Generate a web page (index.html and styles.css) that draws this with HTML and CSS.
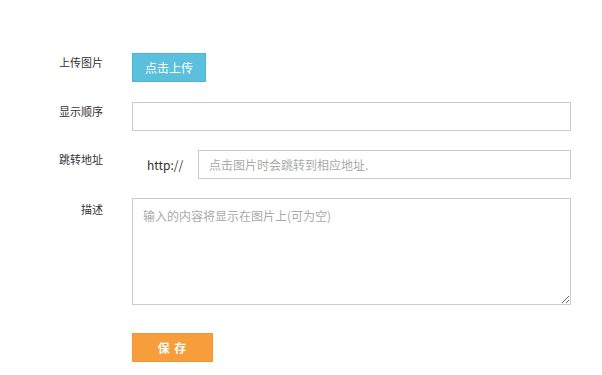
FILE: index.html
```html
<!DOCTYPE html>
<html lang="zh-CN">
<head>
    <meta charset="UTF-8">
    <meta name="viewport" content="width=device-width, initial-scale=1.0">
    <title>添加图片</title>
    <link rel="stylesheet" href="styles.css">
</head>
<body>
    <form class="pic-form">
        <div class="form-row">
            <label class="form-label">上传图片</label>
            <div class="form-field">
                <button type="button" class="btn-upload">点击上传</button>
            </div>
        </div>
        <div class="form-row">
            <label class="form-label" for="sort">显示顺序</label>
            <div class="form-field">
                <input type="text" id="sort" class="text-input">
            </div>
        </div>
        <div class="form-row">
            <label class="form-label" for="link">跳转地址</label>
            <div class="form-field link-field">
                <span class="link-prefix">http://</span>
                <input type="text" id="link" class="text-input" placeholder="点击图片时会跳转到相应地址.">
            </div>
        </div>
        <div class="form-row">
            <label class="form-label desc-label" for="desc">描述</label>
            <div class="form-field">
                <textarea id="desc" class="text-area" placeholder="输入的内容将显示在图片上(可为空)"></textarea>
            </div>
        </div>
        <div class="form-row save-row">
            <div class="form-label"></div>
            <div class="form-field">
                <button type="submit" class="btn-save">保 存</button>
            </div>
        </div>
    </form>
</body>
</html>
```

FILE: styles.css
```css
body {
    margin: 0;
    padding: 0;
    background: #fff;
    font-family: "Noto Sans CJK SC", "Noto Sans", sans-serif;
    font-size: 12px;
    color: #333;
}
.pic-form {
    padding-top: 53px;
}
.form-row {
    display: flex;
    align-items: flex-start;
    gap: 29px;
    margin-bottom: 19px;
}
.form-label {
    width: 103px;
    flex-shrink: 0;
    text-align: right;
    font-size: 11px;
    line-height: 16px;
    padding-top: 1px;
}
.desc-label {
    padding-top: 3px;
}
.form-field {
    width: 439px;
}
.btn-upload {
    display: block;
    width: 74px;
    height: 29px;
    margin-bottom: 1px;
    background-color: #5bc0de;
    border: 1px solid #46b8da;
    color: #fff;
    font-family: inherit;
    font-size: 12px;
    padding: 0;
    cursor: pointer;
}
.text-input {
    display: block;
    width: 100%;
    height: 29px;
    box-sizing: border-box;
    border: 1px solid #ccc;
    padding: 0 10px;
    font-family: inherit;
    font-size: 12px;
    color: #333;
    outline: none;
}
.link-field {
    display: flex;
    align-items: center;
}
.link-prefix {
    width: 51px;
    padding-left: 15px;
    flex-shrink: 0;
    color: #333;
}
.link-field .text-input {
    flex: 1;
    width: auto;
}
.text-input::placeholder,
.text-area::placeholder {
    color: #aaa;
}
.text-area {
    display: block;
    width: 100%;
    height: 107px;
    box-sizing: border-box;
    border: 1px solid #ccc;
    padding: 8px 10px;
    font-family: inherit;
    font-size: 12px;
    color: #333;
    outline: none;
}
.save-row {
    margin-top: 28px;
}
.btn-save {
    display: block;
    width: 81px;
    height: 29px;
    background-color: #f79d3c;
    border: 1px solid #f39532;
    color: #fff;
    font-family: inherit;
    font-size: 12px;
    font-weight: bold;
    letter-spacing: 1px;
    padding: 0;
    cursor: pointer;
}
```
